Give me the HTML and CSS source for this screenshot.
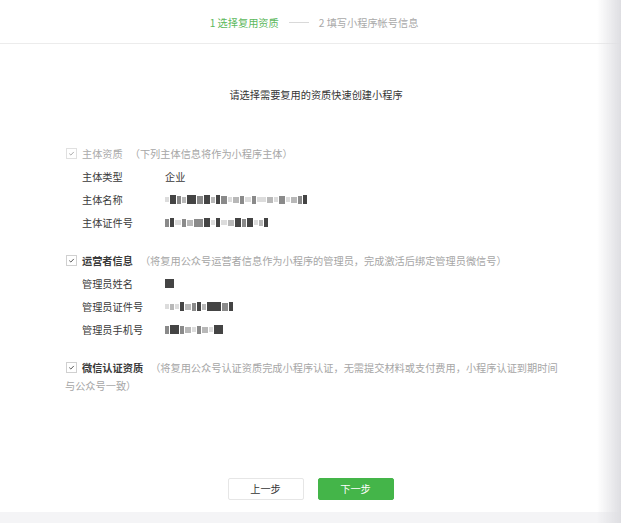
FILE: index.html
```html
<!DOCTYPE html>
<html lang="zh-CN">
<head>
<meta charset="utf-8">
<title>创建小程序</title>
<link rel="stylesheet" href="styles.css">
</head>
<body>
<div class="page">
  <header class="steps-bar">
    <div class="steps">
      <span class="step step-active">1 选择复用资质</span>
      <span class="step-line"></span>
      <span class="step">2 填写小程序帐号信息</span>
    </div>
  </header>

  <main class="main">
    <div class="column">
      <h1 class="title">请选择需要复用的资质快速创建小程序</h1>

      <section class="section">
        <div class="sec-head"><span class="cb cb-disabled"><svg viewBox="0 0 11 11"><path d="M2.8 5.6 L4.7 7.4 L8.3 3.6"/></svg></span><span class="sec-label sec-label-disabled">主体资质</span><span class="hint">（下列主体信息将作为小程序主体）</span></div>
        <div class="row"><span class="row-label">主体类型</span><span class="row-value">企业</span></div>
        <div class="row"><span class="row-label">主体名称</span><span class="mosaic"><i class="px l w2"></i><i class="px d w3"></i><i class="px m w2"></i><i class="px g w2"></i><i class="px d w4"></i><i class="px m w3"></i><i class="px d w3"></i><i class="px g w2"></i><i class="px d w2"></i><i class="px m w3"></i><i class="px l w2"></i><i class="px g w3"></i><i class="px m w2"></i><i class="px l w3"></i><i class="px m w2"></i><i class="px l w4"></i><i class="px g w3"></i><i class="px l w2"></i><i class="px m w3"></i><i class="px l w2"></i><i class="px g w3"></i><i class="px m w2"></i><i class="px d w2"></i></span></div>
        <div class="row"><span class="row-label">主体证件号</span><span class="mosaic"><i class="px m w2"></i><i class="px d w2"></i><i class="px l w3"></i><i class="px m w2"></i><i class="px g w3"></i><i class="px m w4"></i><i class="px d w3"></i><i class="px l w2"></i><i class="px d w2"></i><i class="px l w3"></i><i class="px g w3"></i><i class="px d w3"></i><i class="px m w2"></i><i class="px d w3"></i><i class="px l w2"></i><i class="px g w2"></i><i class="px d w2"></i></span></div>
      </section>

      <section class="section">
        <div class="sec-head"><span class="cb"><svg viewBox="0 0 11 11"><path d="M2.8 5.6 L4.7 7.4 L8.3 3.6"/></svg></span><span class="sec-label">运营者信息</span><span class="hint">（将复用公众号运营者信息作为小程序的管理员，完成激活后绑定管理员微信号）</span></div>
        <div class="row"><span class="row-label">管理员姓名</span><span class="mosaic"><i class="px d w4"></i></span></div>
        <div class="row"><span class="row-label">管理员证件号</span><span class="mosaic"><i class="px l w2"></i><i class="px g w2"></i><i class="px l w2"></i><i class="px d w2"></i><i class="px g w3"></i><i class="px m w2"></i><i class="px d w2"></i><i class="px g w2"></i><i class="px d w6"></i><i class="px m w3"></i><i class="px d w2"></i></span></div>
        <div class="row"><span class="row-label">管理员手机号</span><span class="mosaic"><i class="px m w2"></i><i class="px d w4"></i><i class="px m w2"></i><i class="px g w3"></i><i class="px l w2"></i><i class="px m w2"></i><i class="px g w3"></i><i class="px l w2"></i><i class="px d w4"></i></span></div>
      </section>

      <section class="section">
        <div class="sec-head"><span class="cb"><svg viewBox="0 0 11 11"><path d="M2.8 5.6 L4.7 7.4 L8.3 3.6"/></svg></span><span class="sec-label">微信认证资质</span><span class="hint">（将复用公众号认证资质完成小程序认证，无需提交材料或支付费用，小程序认证到期时间与公众号一致）</span></div>
      </section>
    </div>

    <div class="actions">
      <button class="btn">上一步</button>
      <button class="btn btn-primary">下一步</button>
    </div>
  </main>

  <footer class="bottom-band"></footer>
</div>
</body>
</html>
```

FILE: styles.css
```css
* { box-sizing: border-box; }

html, body {
  margin: 0;
  padding: 0;
  background: #fff;
}

body {
  font-family: "Noto Sans CJK SC", "Noto Sans", sans-serif;
  font-size: 10.2px;
  color: #353535;
}

.page {
  height: 523px;
  display: flex;
  flex-direction: column;
  overflow: hidden;
}

/* right edge shading overlay */
.page::after {
  content: "";
  position: fixed;
  top: 0;
  right: 0;
  width: 24px;
  height: 100%;
  background: linear-gradient(to right, rgba(230,230,234,0), rgba(222,222,226,1));
  pointer-events: none;
}

.steps-bar {
  height: 44px;
  border-bottom: 1px solid #ececec;
  display: flex;
  align-items: center;
}

.steps {
  margin-left: 63px;
  width: 502px;
  display: flex;
  justify-content: center;
  align-items: center;
  line-height: 14px;
  padding-top: 2px;
}

.step { color: #a9a9a9; }
.step-active { color: #5cb85c; }

.step-line {
  width: 20px;
  height: 1px;
  background: #d9d9d9;
  margin: 0 10px;
}

.main {
  flex: 1;
  display: flex;
  flex-direction: column;
}

.column {
  margin-left: 65px;
  width: 502px;
}

.title {
  margin: 42px 0 41px;
  font-size: 10.2px;
  font-weight: normal;
  line-height: 18px;
  text-align: center;
  color: #353535;
}

.section {
  width: 494px;
  margin-bottom: 18px;
}

.sec-head {
  line-height: 18px;
  margin-bottom: 2px;
}

.cb {
  display: inline-block;
  width: 11px;
  height: 11px;
  border: 1px solid #d0d0d0;
  background: #fff;
  margin-left: 1px;
  margin-right: 5px;
  vertical-align: -1px;
}

.cb svg {
  display: block;
  width: 9px;
  height: 9px;
}

.cb path {
  fill: none;
  stroke: #555;
  stroke-width: 1.2;
}

.cb-disabled { border-color: #e0e0e0; }
.cb-disabled path { stroke: #a8a8a8; }

.sec-label {
  font-weight: bold;
  color: #3a3a3a;
}

.sec-label-disabled {
  font-weight: normal;
  color: #aaa;
}

.hint {
  color: #a6a6a6;
  margin-left: 7px;
}

.row {
  height: 23px;
  padding-left: 17px;
  display: flex;
  align-items: center;
}

.row-label {
  width: 83px;
  flex: none;
  color: #3a3a3a;
}

.row-value { color: #3a3a3a; }

.mosaic {
  display: flex;
  align-items: center;
  gap: 1px;
  height: 9px;
  filter: blur(0.4px);
}

.px {
  display: block;
  height: 8px;
}

.d { background: #444; height: 9px; }
.m { background: #8a8a8a; }
.g { background: #b8b8b8; height: 6px; }
.l { background: #dcdcdc; height: 5px; }

.w2 { width: 4px; }
.w3 { width: 6px; }
.w4 { width: 9px; }
.w6 { width: 14px; }

.actions {
  margin-top: auto;
  margin-bottom: 12px;
  display: flex;
  justify-content: center;
  gap: 14px;
}

.btn {
  width: 76px;
  height: 22px;
  padding: 0;
  border: 1px solid #e6e6e6;
  border-radius: 2px;
  background: #fff;
  color: #353535;
  font-family: inherit;
  font-size: 10.2px;
  line-height: 20px;
}

.btn-primary {
  background: #44b549;
  border-color: #44b549;
  color: #fff;
}

.bottom-band {
  height: 11px;
  background: #f4f4f6;
  flex: none;
}
```
